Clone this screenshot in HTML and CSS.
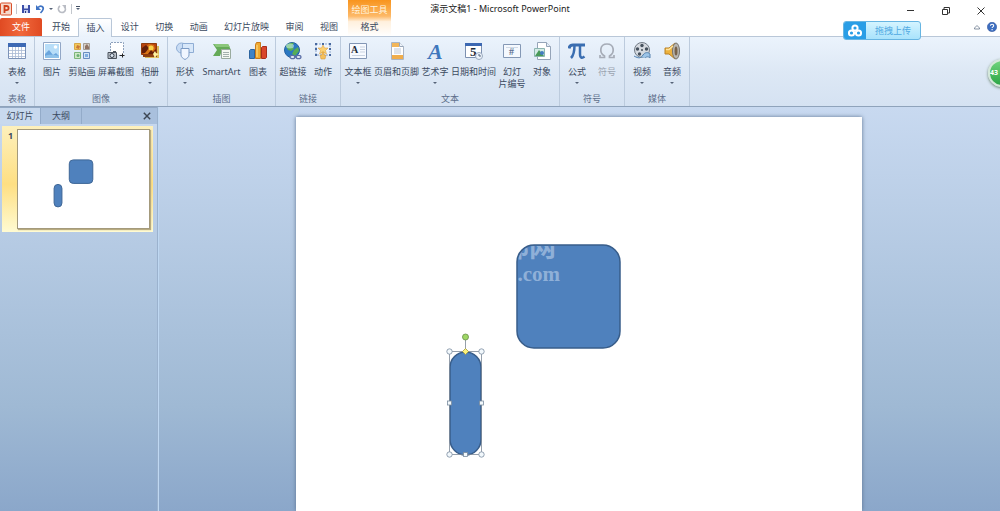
FILE: index.html
```html
<!DOCTYPE html>
<html lang="zh-CN">
    <head>
        <meta charset="UTF-8">
        <title>演示文稿1 - Microsoft PowerPoint</title>
        <link rel="stylesheet" href="styles.css">
    </head>
    <body>
        <header class="topo">
            <div class="barra">
                <div class="atalhos">
                    <svg class="logo" viewBox="0 0 12 14"><rect x=".5" y="1" width="11" height="12" rx="1" fill="#f6d9cc" stroke="#d9512c"/><path d="M4.500 11V4h2a2 2 0 0 1 0 4.200h-2" fill="none" stroke="#cf3f1b" stroke-width="1.800"/></svg>
                    <span class="risco"></span>
                    <button aria-label="保存"><svg viewBox="0 0 10 10"><path d="M1 1h8v8H1z" fill="#3c4fa8"/><path d="M3 1h4v3.500H3z" fill="#e8edfb"/><path d="M3 6h4v3H3z" fill="#c4cbed"/><path d="M4 7h1v2H4z" fill="#28377f"/></svg></button>
                    <button aria-label="撤消"><svg viewBox="0 0 10 10"><path d="M3 3.500C6 .5 9 3 8 5.500 7.500 7 6.500 8 5.500 9" fill="none" stroke="#3e73c4" stroke-width="1.700"/><path d="M1 1v5h5z" fill="#3e73c4"/></svg></button>
                    <span class="seta"></span>
                    <button aria-label="恢复"><svg viewBox="0 0 10 10"><path d="M3 2C0 4 1.500 8.500 5 8.500S9.500 4.500 7 2.500" fill="none" stroke="#b9bcc4" stroke-width="1.600"/><path d="M5 1h4v4z" fill="#b9bcc4"/></svg></button>
                    <span class="risco"></span>
                    <span class="seta lista"></span>
                </div>
                <h1>演示文稿1 - Microsoft PowerPoint</h1>
                <div class="janela">
                    <button aria-label="最小化"><svg viewBox="0 0 10 10"><path d="M1 4.500h7" stroke="#333"/></svg></button>
                    <button aria-label="还原"><svg viewBox="0 0 10 10"><path d="M1.500 3.500h5v5h-5zM3 3V1.500h5.500V7H7" fill="none" stroke="#333"/></svg></button>
                    <button aria-label="关闭"><svg viewBox="0 0 10 10"><path d="M1.500 1.500l7 7m0-7l-7 7" stroke="#333"/></svg></button>
                </div>
            </div>
            <div class="abas">
                <button class="arquivo">文件</button>
                <nav>
                    <button>开始</button>
                    <button class="ativa">插入</button>
                    <button>设计</button>
                    <button>切换</button>
                    <button>动画</button>
                    <button>幻灯片放映</button>
                    <button>审阅</button>
                    <button>视图</button>
                </nav>
                <div class="contexto">
                    <span>绘图工具</span>
                    <button>格式</button>
                </div>
                <div class="ajuda">
                    <button aria-label="功能区最小化"><svg viewBox="0 0 10 10"><path d="M2.500 6L5 3.500 7.500 6v1h-5z" fill="#fff" stroke="#68778c" stroke-width=".8"/></svg></button>
                    <button aria-label="帮助"><svg viewBox="0 0 10 10"><circle cx="5" cy="5" r="4.700" fill="#3d6ec0" stroke="#2c4f95" stroke-width=".5"/><path d="M3.500 3.800c0-2 3.200-2 3.200 0 0 1.200-1.600 1-1.600 2.300M5.100 7v1.200" fill="none" stroke="#fff" stroke-width="1.100"/></svg></button>
                </div>
            </div>
        </header>

        <div class="faixa">
            <section>
                <div class="botoes">
                    <button><svg viewBox="0 0 18 18"><path d="M.5 1.500h17v15H.5z" fill="#fff" stroke="#7c93b8"/><path d="M0 1h18v4H0z" fill="#3d69b4"/><path d="M1 8.500h16M1 11.500h16M1 14.500h16M4.500 5v11M7.500 5v11M10.500 5v11M13.500 5v11" stroke="#a9bad4" stroke-width=".8"/></svg><span>表格</span><i class="seta"></i></button>
                </div>
                <h2>表格</h2>
            </section>
            <section>
                <div class="botoes">
                    <button><svg viewBox="0 0 18 18"><path d="M.5.5h17v17H.5z" fill="#fff" stroke="#92a7c6"/><path d="M2 2h14v14H2z" fill="#b7ddf8"/><path d="M2 12l4-4 4 5 3-2 3 3v2H2z" fill="#6aa5dd"/><path d="M2 14c5-2 9-1 14 0v2H2z" fill="#8fc2ea"/><circle cx="12.500" cy="5" r="1.800" fill="#fff"/></svg><span>图片</span></button>
                    <button><svg viewBox="0 0 18 18"><path d="M1.500 1.500h6v6h-6z" fill="#f2c85b" stroke="#d8a748"/><path d="M3 6l1-3 3 1-1 3z" fill="#c9783a"/><path d="M10.500 1.500h6v6h-6z" fill="#d7d2ca" stroke="#a59d95"/><path d="M12 7V4l2-2 2 3v2z" fill="#8f7263"/><path d="M1.500 10.500h6v6h-6z" fill="#cfe8c6" stroke="#7db67b"/><circle cx="5" cy="13.500" r="1.500" fill="#6caf76"/><path d="M10.500 10.500h6v6h-6z" fill="#d3e4f7" stroke="#6a8dc0"/><path d="M12 12h3v3h-3z" fill="#7fade0"/></svg><span>剪贴画</span></button>
                    <button><svg viewBox="0 0 18 18"><path d="M3.500.5h13v12h-13z" fill="#fff"/><path d="M3.500 9V.5h13V11" fill="none" stroke="#8fa2bd" stroke-dasharray="2 1"/><path d="M1 10.500h8.500v6H1zM6 9.500h3" fill="#b9c0c8" stroke="#4b535d"/><circle cx="5" cy="13.500" r="2" fill="#dce6f1" stroke="#39424e"/><path d="M12.500 13.500h5m-2-2v4" stroke="#222"/></svg><span>屏幕截图</span><i class="seta"></i></button>
                    <button><svg viewBox="0 0 18 18"><path d="M4 4h14v12H4z" fill="#dcb95a"/><path d="M2 3h14v12H2z" fill="#8d3f12"/><path d="M.5 1.500h15v11H.5z" fill="#b8430e" stroke="#8f3b0d"/><path d="M2 10l2-5 4-3 5 1 1 4-3 5H3z" fill="#d97417"/><path d="M1 6l4-3 3 3-4 5H1z" fill="#651f09"/><circle cx="10" cy="6" r="2.500" fill="#f8d24c"/><path d="M7 12l3-4 2 2 3-3v5z" fill="#651f09"/><path d="M12 12l2-3 1 2 3 1-3 2-1 3-1-3z" fill="#fff2a0"/></svg><span>相册</span><i class="seta"></i></button>
                </div>
                <h2>图像</h2>
            </section>
            <section>
                <div class="botoes">
                    <button><svg viewBox="0 0 18 18"><circle cx="5.500" cy="6" r="5" fill="#c8dcf4" stroke="#8fadd4"/><path d="M6.500 1.500h11v9h-11z" fill="#d7e7f9" stroke="#8fadd4"/><path d="M5 6.500h8V13c0 2-2 3.500-4 4.500-2-1-4-2.500-4-4.500z" fill="#f0f6ff" stroke="#7c9bc5"/></svg><span>形状</span><i class="seta"></i></button>
                    <button class="largo"><svg viewBox="0 0 18 18"><path d="M0 2h15l3 6H9L7 14H0l4-6z" fill="#65aa58"/><path d="M1 2h14l2 3H3z" fill="#8bc77b"/><path d="M8.500 7.500h9v9h-9z" fill="#f4f8f2" stroke="#9aab9f"/><path d="M10 10.500h6M10 12.500h6M10 14.500h6" stroke="#a3b0ac"/></svg><span>SmartArt</span></button>
                    <button><svg viewBox="0 0 18 18"><path d="M.5 8.500l1-1h4v9h-5z" fill="#3e83c7" stroke="#2c649f"/><path d="M6.500 2.500l1-2h4v16h-5z" fill="#f0aa31" stroke="#c9791a"/><path d="M12.500 5.500l1-1h4v11l-1 1h-4z" fill="#d9462c" stroke="#a72e1d"/><path d="M8 3v12" stroke="#ffe08b"/></svg><span>图表</span></button>
                </div>
                <h2>插图</h2>
            </section>
            <section>
                <div class="botoes">
                    <button><svg viewBox="0 0 18 18"><circle cx="8" cy="8" r="7.500" fill="#2b78c2" stroke="#2461a1"/><path d="M2 4c2-3 6-4 8-3L8 4l2 3-3 2-3-1zM10 8l4-3 1 4-4 5-3-2z" fill="#58ad56"/><ellipse cx="6" cy="4" rx="4" ry="2.500" fill="#c8efe0" opacity=".6"/><g fill="#e4ebf7" stroke="#5b6fa6" stroke-width="1.200"><ellipse cx="8.500" cy="15" rx="2.500" ry="1.700"/><ellipse cx="14.500" cy="15" rx="2.500" ry="1.700"/><path d="M10 15h3"/></g></svg><span>超链接</span></button>
                    <button><svg viewBox="0 0 18 18"><path d="M2 2h14v11H2z" fill="#edf4fd" stroke="#8aa3cb" stroke-dasharray="2 1"/><path d="M1 1h2v2H1zM8 1h2v2H8zM15 1h2v2h-2zM1 12h2v2H1zM15 12h2v2h-2zM1 6h2v2H1zM15 6h2v2h-2z" fill="#48699f"/><path d="M9 3l1.500 3H14l-2.500 2.500 1 3.500L9 10l-3.500 2 1-3.500L4 6h3.500z" fill="#fbd072" stroke="#d9962c" stroke-width=".5"/><path d="M8 10h2v3h2l-1 4H7l-1-4h2z" fill="#f5c05c" stroke="#cf9130" stroke-width=".5"/></svg><span>动作</span></button>
                </div>
                <h2>链接</h2>
            </section>
            <section>
                <div class="botoes">
                    <button><svg viewBox="0 0 18 18"><path d="M.5 1.500h17v15H.5z" fill="#f7faff" stroke="#8296b5"/><text x="2" y="11" class="letra">A</text><path d="M11 5h5M11 7.500h5M11 10h5M3 13.500h13" stroke="#c9d3e1"/></svg><span>文本框</span><i class="seta"></i></button>
                    <button><svg viewBox="0 0 18 18"><path d="M3.500.5h8l4 4v13h-12z" fill="#fff" stroke="#a9b5c5"/><path d="M4 1h7v4H4z" fill="#f2b65a"/><path d="M4 13h11v4H4z" fill="#f0ad4b"/><path d="M11.500.5v4h4" fill="#eef3fa" stroke="#98a6b9"/><path d="M6 7h7M6 9h7M6 11h7" stroke="#bdc8d7"/></svg><span>页眉和页脚</span></button>
                    <button><svg viewBox="0 0 18 18"><text x="2" y="17" class="letra arte">A</text></svg><span>艺术字</span><i class="seta"></i></button>
                    <button><svg viewBox="0 0 18 18"><path d="M.5 1.500h16v14H.5z" fill="#fff" stroke="#7c90b0"/><path d="M0 1h17v3H0z" fill="#3c68b2"/><text x="5" y="14" class="letra dia">5</text><circle cx="14" cy="14" r="3.500" fill="#eef4fb" stroke="#9aa9be"/><path d="M14 12v2h2" fill="none" stroke="#53657e"/></svg><span>日期和时间</span></button>
                    <button><svg viewBox="0 0 18 18"><path d="M.5 2.500h17v13H.5z" fill="#f5f9fe" stroke="#8498b5"/><path d="M3 5.500h12" stroke="#d1dae6"/><text x="6" y="13" class="letra cerca">#</text></svg><span>幻灯<br>片编号</span></button>
                    <button><svg viewBox="0 0 18 18"><path d="M4.500.5h9l4 4v13h-13z" fill="#fff" stroke="#95a4b8"/><path d="M13.500.5v4h4" fill="#e4edf8" stroke="#95a4b8"/><path d="M1.500 6.500h10v8h-10z" fill="#d3ebe6" stroke="#8cb5b0"/><path d="M2 14l4-6 5 6z" fill="#489958"/><circle cx="9" cy="11" r="2" fill="#437cc0"/></svg><span>对象</span></button>
                </div>
                <h2>文本</h2>
            </section>
            <section>
                <div class="botoes">
                    <button><svg viewBox="0 0 18 18"><path d="M1 6.500C1.500 3.500 3 3 5 3h12" fill="none" stroke="#3a6eb1" stroke-width="3"/><path d="M6.500 3c0 6-.5 10-3.500 13M12 3v9c0 4 2 4.500 4.500 2.500" fill="none" stroke="#3a6eb1" stroke-width="2.500"/></svg><span>公式</span><i class="seta"></i></button>
                    <button disabled><svg viewBox="0 0 18 18"><path d="M2 13v2.500h4.500V14C1 11 1.500 2 9 2s8 9 2.500 12v1.500H16V13" fill="none" stroke="#a6acb7" stroke-width="1.700"/></svg><span>符号</span></button>
                </div>
                <h2>符号</h2>
            </section>
            <section>
                <div class="botoes">
                    <button><svg viewBox="0 0 18 18"><circle cx="9" cy="8" r="7.500" fill="#d5dae0" stroke="#737c87"/><g fill="#46515d"><circle cx="9" cy="3.500" r="1.700"/><circle cx="4.500" cy="7" r="1.700"/><circle cx="13.500" cy="7" r="1.700"/><circle cx="6.500" cy="12" r="1.700"/><circle cx="9" cy="8" r="1"/></g><path d="M1 14c5 3 7 2 9-1s5-3 7-1v4c-2-2-4-1-5 0" fill="#9cc4e7" stroke="#5682ae"/></svg><span>视频</span><i class="seta"></i></button>
                    <button><svg viewBox="0 0 18 18"><path d="M2 6h4l6-5v16l-6-5H2z" fill="#edb23d" stroke="#b98126"/><ellipse cx="13" cy="9" rx="3.500" ry="8" fill="#b8b6b1" stroke="#77736c"/><ellipse cx="13" cy="9" rx="1.500" ry="4.500" fill="#77624a"/><path d="M3 7.500h3l4-3.500" fill="none" stroke="#ffe4a0" stroke-width="1.500"/></svg><span>音频</span><i class="seta"></i></button>
                </div>
                <h2>媒体</h2>
            </section>
        </div>

        <main>
            <aside>
                <div class="guias">
                    <button class="ativa">幻灯片</button>
                    <button>大纲</button>
                    <button class="fechar" aria-label="关闭"><svg viewBox="0 0 10 10"><path d="M1 1l8 8m0-8l-8 8" stroke="#3c4653" stroke-width="1.800"/></svg></button>
                </div>
                <div class="miniatura">
                    <span>1</span>
                    <svg viewBox="0 0 133 100"><rect x="52" y="30.500" width="24" height="24" rx="4" fill="#4f81bd" stroke="#3c6494"/><rect x="36.500" y="55.500" width="8" height="23" rx="4" fill="#4f81bd" stroke="#3c6494"/></svg>
                </div>
            </aside>
            <div class="area">
                <div class="slide">
                    <svg viewBox="0 0 566 394">
                        <rect x="221" y="128" width="103" height="103" rx="17" fill="#4f81bd" stroke="#385d8a" stroke-width="1.500"/>
                        <clipPath id="corte"><rect x="222" y="129" width="101" height="101" rx="16"/></clipPath>
                        <g class="marca" clip-path="url(#corte)">
                            <text x="206" y="140" class="rede">部网</text>
                            <text x="264" y="164" text-anchor="end">.com</text>
                        </g>
                        <rect x="154" y="235" width="31" height="103" rx="15.500" fill="#4f81bd" stroke="#385d8a" stroke-width="1.500"/>
                        <path d="M153.500 234.500h32v103h-32zM169.500 221v13" fill="none" stroke="#7a8796" stroke-width=".8"/>
                        <g fill="#f2f8fc" stroke="#7a8c9f" stroke-width=".8">
                            <circle cx="153.500" cy="234.500" r="2.700"/>
                            <circle cx="185.500" cy="234.500" r="2.700"/>
                            <circle cx="153.500" cy="337.500" r="2.700"/>
                            <circle cx="185.500" cy="337.500" r="2.700"/>
                            <rect x="151.500" y="284" width="4" height="4"/>
                            <rect x="183.500" y="284" width="4" height="4"/>
                            <rect x="167.500" y="335.500" width="4" height="4"/>
                        </g>
                        <circle cx="169.500" cy="220" r="3" fill="#9fd765" stroke="#688f49" stroke-width=".8"/>
                        <path d="M169.500 231.500l3 3-3 3-3-3z" fill="#fbf27b" stroke="#a49a43" stroke-width=".8"/>
                    </svg>
                </div>
            </div>
        </main>

        <button class="enviar">
            <svg viewBox="0 0 22 18"><g fill="none" stroke="#fff" stroke-width="2"><circle cx="11" cy="6" r="2.600"/><circle cx="7.500" cy="11" r="2.600"/><circle cx="14.500" cy="11" r="2.600"/></g></svg>
            <span>拖拽上传</span>
        </button>
        <div class="bolha">43</div>
    </body>
</html>
```
FILE: styles.css
```css
*{
    box-sizing: border-box;
}
body{
    margin: 0;
    height: 100vh;
    display: flex;
    flex-direction: column;
    position: relative;
    overflow: hidden;
    background: #fff;
    color: #3b4a60;
    font-family: "Noto Sans", "Noto Sans CJK SC", sans-serif;
    font-size: 9px;
    line-height: 12px;
}
button{
    margin: 0;
    padding: 0;
    border: 0;
    background: none;
    color: inherit;
    font: inherit;
}
svg{
    display: block;
}
h1, h2{
    margin: 0;
    font-size: 9px;
    font-weight: normal;
}
.seta{
    border: 2px solid transparent;
    border-top-color: #556277;
    border-bottom: 0;
}

/* barra de titulo */
.barra{
    height: 18px;
    display: grid;
    grid-template-columns: 1fr auto 1fr;
    align-items: center;
}
.barra h1{
    color: #222;
}
.atalhos{
    display: flex;
    align-items: center;
    gap: 4px;
}
.atalhos svg{
    width: 10px;
    height: 10px;
}
.atalhos .logo{
    width: 12px;
    height: 14px;
}
.risco{
    width: 1px;
    height: 10px;
    background: #c3c7cd;
}
.lista{
    position: relative;
}
.lista::before{
    content: "";
    position: absolute;
    left: -2px;
    top: -4px;
    width: 4px;
    height: 1px;
    background: #445064;
}
.janela{
    display: flex;
    justify-content: flex-end;
    gap: 25px;
    padding: 3px 14px 0 0;
}
.janela svg{
    width: 10px;
    height: 10px;
}

/* abas */
.abas{
    height: 19px;
    display: flex;
    border-bottom: 1px solid #b9c7d8;
}
.arquivo{
    width: 42px;
    border-radius: 2px 2px 0 0;
    background: linear-gradient(90deg, #e04a22, #f0683c 50%, #e04a22);
    color: #fff;
}
.abas nav{
    width: 302px;
    margin-left: 2px;
    display: flex;
    justify-content: space-between;
}
.abas nav button{
    padding: 0 8px;
}
.abas nav .ativa{
    height: 19px;
    padding: 0 7px;
    border: 1px solid #b9c7d8;
    border-bottom: 0;
    border-radius: 2px 2px 0 0;
    background: linear-gradient(#fff, #eaf2fb);
}
.contexto{
    width: 43px;
    margin: -18px 0 0 2px;
    display: flex;
    flex-direction: column;
    text-align: center;
    background: linear-gradient(#f8941d, #fdb968 45%, #fff0dd 60%, #fff);
}
.contexto span{
    padding: 4px 0 2px;
    color: #fff3df;
}
.contexto button{
    flex: 1;
}
.ajuda{
    margin-left: auto;
    padding-right: 3px;
    display: flex;
    align-items: center;
    gap: 5px;
}
.ajuda svg{
    width: 10px;
    height: 10px;
}

/* faixa de opcoes */
.faixa{
    height: 70px;
    flex: none;
    display: flex;
    border-bottom: 1px solid #8fa3bb;
    background: linear-gradient(#ebf3fc, #dde8f5 50%, #d5e2f2);
}
.faixa section{
    padding-bottom: 1px;
    display: flex;
    flex-direction: column;
    justify-content: space-between;
    border-right: 1px solid #bccbdd;
}
.faixa h2{
    text-align: center;
    color: #5d6f8b;
}
.botoes{
    padding: 5px 3px 0;
    display: flex;
    align-items: flex-start;
    gap: 2px;
}
.botoes button{
    min-width: 28px;
    display: flex;
    flex-direction: column;
    align-items: center;
    white-space: nowrap;
}
.botoes .largo{
    width: 41px;
}
.botoes svg{
    width: 18px;
    height: 18px;
    margin-bottom: 6px;
}
.botoes .seta{
    margin-top: 4px;
}
.botoes button:disabled{
    color: #9ba4b1;
}
.letra{
    fill: #222b38;
    font: bold 10px "Liberation Serif", serif;
}
.arte{
    fill: #3e77bd;
    font-size: 22px;
    font-style: italic;
}
.dia{
    font-size: 13px;
}
.cerca{
    fill: #5d7192;
}

/* area de trabalho */
main{
    flex: 1;
    min-height: 0;
    display: flex;
    background: linear-gradient(#c8d9f0, #9fb9d4 74%, #8ba7ca);
}
aside{
    width: 158px;
    flex: none;
    border-right: 1px solid #9bb2ce;
}
.guias{
    height: 17px;
    display: flex;
    border-top: 1px solid #93a9c5;
    background: #a9c0dd;
}
.guias button{
    width: 41px;
    border-right: 1px solid #93abc9;
}
.guias .ativa{
    background: #c8d9ee;
}
.guias .fechar{
    width: 20px;
    margin-left: auto;
    border: 0;
}
.guias svg{
    width: 8px;
    height: 8px;
    margin: 0 auto;
}
.miniatura{
    margin: 2px 4px 0 2px;
    padding: 3px;
    display: flex;
    justify-content: space-between;
    background: linear-gradient(#fdf0bc, #fedf83 55%, #fffbd2);
}
.miniatura span{
    padding: 1px 3px;
    font-weight: bold;
}
.miniatura svg{
    width: 133px;
    height: 100px;
    border: 1px solid #a49a7c;
    box-shadow: 1px 1px 1px #b8ab80;
    background: #fff;
}
.area{
    flex: 1;
    padding: 10px 138px 0 137px;
    border-left: 1px solid #bfd8f2;
    display: flex;
}
.slide{
    flex: 1;
    background: #fff;
    box-shadow: 0 0 4px #5d7390;
}
.slide svg{
    width: 100%;
}
.marca{
    fill: #8fb0d8;
    font: bold 21px "Liberation Serif", serif;
}
.marca .rede{
    font: bold 27px "Noto Sans CJK SC", sans-serif;
}

/* itens flutuantes */
.enviar{
    position: absolute;
    top: 21px;
    right: 79px;
    width: 78px;
    height: 19px;
    display: flex;
    align-items: center;
    border: 1px solid #67b5e2;
    border-radius: 3px;
    background: linear-gradient(#d4f4ff, #a9e3fc);
    color: #4fa9e2;
    overflow: hidden;
}
.enviar svg{
    width: 22px;
    height: 18px;
    background: #2a9ee6;
}
.enviar span{
    flex: 1;
}
.bolha{
    position: absolute;
    top: 59px;
    right: -16px;
    width: 28px;
    height: 28px;
    border: 2px solid #d4e8d8;
    border-radius: 50%;
    background: linear-gradient(#6fd47c, #2ca545);
    box-shadow: 0 1px 3px #68806d;
    color: #fff;
    font-size: 7px;
    font-weight: bold;
    line-height: 24px;
}
```
